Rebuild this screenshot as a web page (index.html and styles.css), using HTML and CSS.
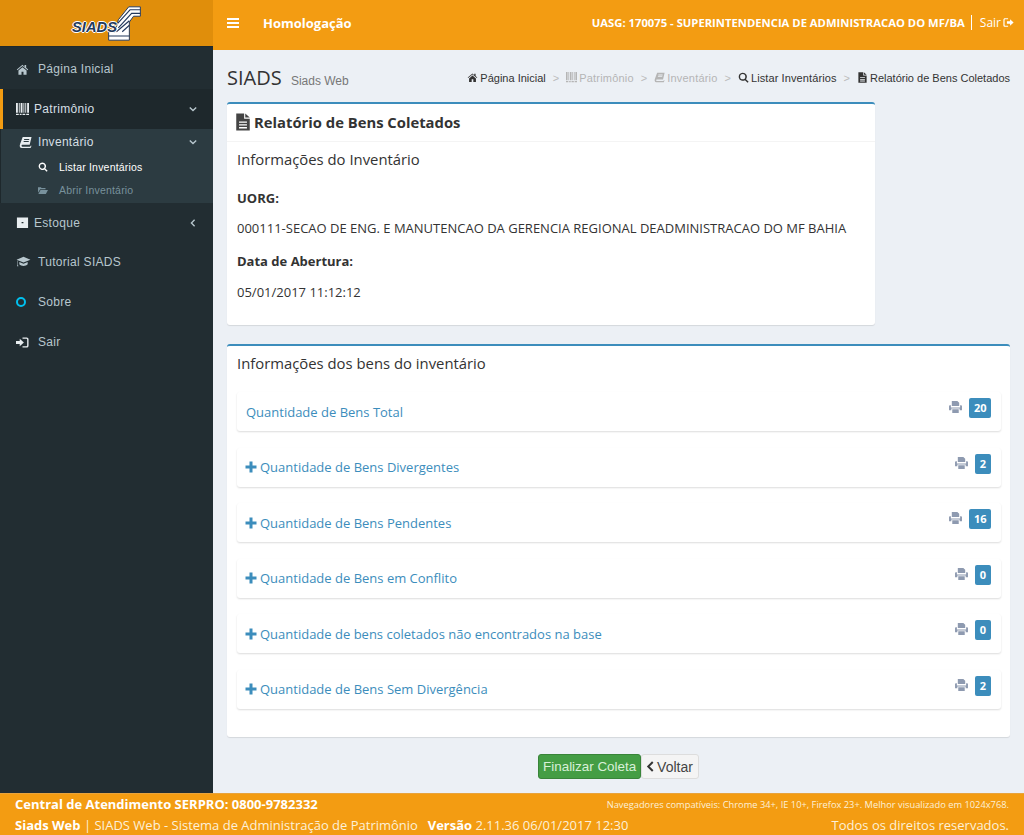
FILE: index.html
```html
<!DOCTYPE html>
<html>
<head>
    <title>SIADS</title>
    <meta charset="utf-8">
    <link rel="stylesheet" href="styles.css">
</head>
<body>
    <svg class="defs" width="0" height="0">
        <symbol id="i-home" viewBox="0 0 16 14"><path d="M8 1 1 7l.7.9L8 2.600l6.300 5.300.7-.9-2.500-2.100V1.500h-2v2.300zM3 8.300V13.500h3.800V9.700h2.400v3.800H13V8.300L8 4.100z"/></symbol>
        <symbol id="i-barcode" viewBox="0 0 14 14"><path d="M0 0h2v10.500H0zM3 0h1v10.500H3zM5 0h2v10.500H5zM8 0h1v10.500H8zM10 0h1v10.500h-1zM12 0h2v10.500h-2zM0 11.500h3v1.500H0zM4 11.500h2V13H4zM7 11.500h3V13H7zM11 11.500h3V13h-3z"/></symbol>
        <symbol id="i-book" viewBox="0 0 14 14"><path d="M4 1h9.500L11.500 9.500H3.500C2.500 9.500 2.500 11.500 3.500 11.500H12L12.500 10.500 13.500 10.500 12.500 13H3C.8 13 .3 10.500 1.200 8.500zM5.500 3.300v1h5.500v-1zM5 5.500v1h5.500v-1z"/></symbol>
        <symbol id="i-search" viewBox="0 0 14 14"><path fill-rule="evenodd" d="M6 .8a5.200 5.200 0 0 1 4.200 8.300l3.300 3.300-1.300 1.300-3.300-3.300A5.200 5.200 0 1 1 6 .8zm0 1.900a3.300 3.300 0 1 0 0 6.600 3.300 3.300 0 0 0 0-6.600z"/></symbol>
        <symbol id="i-folder" viewBox="0 0 14 14"><path d="M0 11V3h4l1 1.300h5.500V6H3L0 11zM3.500 7H14l-3 5.500H.5z"/></symbol>
        <symbol id="i-archive" viewBox="0 0 14 14"><path fill-rule="evenodd" d="M1 1.500h12v11.300H1zM6 6.500v1.200h2V6.500z"/></symbol>
        <symbol id="i-cap" viewBox="0 0 16 14"><path d="M8 2 .5 5 8 8l7.500-3zM3.500 7.500V10c1 1.300 2.800 1.800 4.500 1.800s3.500-.5 4.500-1.800V7.500L8 9.300zM1.500 6v4.500L1 12h1.500L2 10.500V6.200z"/></symbol>
        <symbol id="i-signin" viewBox="0 0 14 14"><path d="M0 5.500h4V3l4.500 4L4 11V8.500H0zM7 1.500h4.500c1.200 0 2 .8 2 2v7c0 1.200-.8 2-2 2H7V11h4.300c.5 0 .7-.3.7-.7V3.700c0-.4-.2-.7-.7-.7H7z"/></symbol>
        <symbol id="i-signout" viewBox="0 0 14 14"><path d="M5 5.500h4V3l4.500 4L9 11V8.500H5zM6.500 1.500H2.500c-1.200 0-2 .8-2 2v7c0 1.200.8 2 2 2h4V11H2.700c-.5 0-.7-.3-.7-.7V3.700c0-.4.2-.7.7-.7h3.800z"/></symbol>
        <symbol id="i-file" viewBox="0 0 14 16"><path fill-rule="evenodd" d="M1 .5h7v4.500h5v10.500H1zM9 .5 13 4H9zM3.500 7.500v1.200h7V7.500zM3.500 10v1.200h7V10zM3.500 12.500v1.200h7v-1.200z"/></symbol>
        <symbol id="i-print" viewBox="0 0 14 13"><path fill-rule="evenodd" d="M3 0h6l2 2v3.500H3zM0 5.500c0-.6.400-1 1-1h1v2.500h10V4.500h1c.6 0 1 .4 1 1V10h-2.500V8h-9v2H0zM3.500 9h7v4h-7z"/></symbol>
        <symbol id="i-plus" viewBox="0 0 12 12"><path d="M4.500 .5h3v4h4v3h-4v4h-3v-4h-4v-3h4z"/></symbol>
    </svg>

    <div class="shell">
        <aside class="sidebar">
            <div class="logo">
                <span class="logo-text">SIADS</span>
                <svg class="logo-mark" width="33" height="35" viewBox="126 13 102 107">
                    <path d="M190 15H226V44H205L192 62V118H128V92H148L158 55z" fill="#fff" stroke="#23395d" stroke-width="3"/>
                    <path d="M226 24H194L156 66M226 35H199L158 80M192 58 152 92M192 72 170 92M192 105H128" stroke="#23395d" stroke-width="3.500" fill="none"/>
                </svg>
            </div>
            <ul class="menu">
                <li class="menu-item item-nudge item-home"><svg class="ico"><use href="#i-home"/></svg><span class="gap-l">Página Inicial</span></li>
                <li class="menu-item item-active"><svg class="ico ico-bright"><use href="#i-barcode"/></svg><span>Patrimônio</span>
                    <svg class="chev" viewBox="0 0 10 10"><path d="M1 3l4 4 4-4" /></svg></li>
                <li class="submenu">
                    <div class="sub-head"><svg class="ico ico-bright"><use href="#i-book"/></svg><span>Inventário</span>
                        <svg class="chev" viewBox="0 0 10 10"><path d="M1 3l4 4 4-4" /></svg></div>
                    <div class="sub-link sub-current"><svg class="ico-sm"><use href="#i-search"/></svg><span>Listar Inventários</span></div>
                    <div class="sub-link"><svg class="ico-sm"><use href="#i-folder"/></svg><span>Abrir Inventário</span></div>
                </li>
                <li class="menu-item item-stock"><svg class="ico ico-bright"><use href="#i-archive"/></svg><span>Estoque</span>
                    <svg class="chev" viewBox="0 0 10 10"><path d="M7 1 3 5l4 4" /></svg></li>
                <li class="menu-item item-tutorial"><svg class="ico"><use href="#i-cap"/></svg><span class="gap-l">Tutorial SIADS</span></li>
                <li class="menu-item item-nudge"><span class="ring"></span><span class="gap-l">Sobre</span></li>
                <li class="menu-item item-nudge"><svg class="ico ico-bright"><use href="#i-signin"/></svg><span class="gap-l">Sair</span></li>
            </ul>
        </aside>

        <div class="main">
            <header class="topbar">
                <svg class="burger" width="12" height="10" viewBox="0 0 12 10"><path d="M0 0h12v2H0zM0 4h12v2H0zM0 8h12v2H0z"/></svg>
                <span class="env">Homologação</span>
                <span class="uasg">UASG: 170075 - SUPERINTENDENCIA DE ADMINISTRACAO DO MF/BA</span>
                <span class="bar-sep"></span>
                <span class="logout">Sair <svg class="ico-logout"><use href="#i-signout"/></svg></span>
            </header>

            <main class="content">
                <div class="page-head">
                    <h1>SIADS <small>Siads Web</small></h1>
                    <ol class="crumbs">
                        <li><svg class="crumb-ico"><use href="#i-home"/></svg>Página Inicial</li>
                        <li class="sep">&gt;</li>
                        <li class="off"><svg class="crumb-ico"><use href="#i-barcode"/></svg>Patrimônio</li>
                        <li class="sep">&gt;</li>
                        <li class="off"><svg class="crumb-ico"><use href="#i-book"/></svg>Inventário</li>
                        <li class="sep">&gt;</li>
                        <li class="crumb-list"><svg class="crumb-ico"><use href="#i-search"/></svg>Listar Inventários</li>
                        <li class="sep">&gt;</li>
                        <li><svg class="crumb-ico"><use href="#i-file"/></svg>Relatório de Bens Coletados</li>
                    </ol>
                </div>

                <section class="box box-info">
                    <h2 class="box-title"><svg class="title-ico"><use href="#i-file"/></svg>Relatório de Bens Coletados</h2>
                    <div class="box-body">
                        <h3>Informações do Inventário</h3>
                        <p class="label label-first">UORG:</p>
                        <p>000111-SECAO DE ENG. E MANUTENCAO DA GERENCIA REGIONAL DEADMINISTRACAO DO MF BAHIA</p>
                        <p class="label">Data de Abertura:</p>
                        <p class="date">05/01/2017 11:12:12</p>
                    </div>
                </section>

                <section class="box box-goods">
                    <h3>Informações dos bens do inventário</h3>
                    <div class="row">
                        <a class="row-link">Quantidade de Bens Total</a>
                        <svg class="print"><use href="#i-print"/></svg><span class="badge">20</span>
                    </div>
                    <div class="row">
                        <a class="row-link"><svg class="plus"><use href="#i-plus"/></svg>Quantidade de Bens Divergentes</a>
                        <svg class="print"><use href="#i-print"/></svg><span class="badge">2</span>
                    </div>
                    <div class="row">
                        <a class="row-link"><svg class="plus"><use href="#i-plus"/></svg>Quantidade de Bens Pendentes</a>
                        <svg class="print"><use href="#i-print"/></svg><span class="badge">16</span>
                    </div>
                    <div class="row">
                        <a class="row-link"><svg class="plus"><use href="#i-plus"/></svg>Quantidade de Bens em Conflito</a>
                        <svg class="print"><use href="#i-print"/></svg><span class="badge">0</span>
                    </div>
                    <div class="row">
                        <a class="row-link"><svg class="plus"><use href="#i-plus"/></svg>Quantidade de bens coletados não encontrados na base</a>
                        <svg class="print"><use href="#i-print"/></svg><span class="badge">0</span>
                    </div>
                    <div class="row">
                        <a class="row-link"><svg class="plus"><use href="#i-plus"/></svg>Quantidade de Bens Sem Divergência</a>
                        <svg class="print"><use href="#i-print"/></svg><span class="badge">2</span>
                    </div>
                </section>

                <div class="actions">
                    <button class="btn btn-success">Finalizar Coleta</button>
                    <button class="btn btn-back"><svg class="back-ico" viewBox="0 0 10 12"><path d="M7.500 1 2.500 6l5 5"/></svg>Voltar</button>
                </div>
            </main>
        </div>
    </div>

    <footer class="footer">
        <div class="foot-line">
            <strong class="foot-phone">Central de Atendimento SERPRO: 0800-9782332</strong>
            <span class="foot-small">Navegadores compatíveis: Chrome 34+, IE 10+, Firefox 23+. Melhor visualizado em 1024x768.</span>
        </div>
        <div class="foot-line">
            <span><strong>Siads Web</strong> | SIADS Web - Sistema de Administração de Patrimônio &nbsp;<strong class="foot-ver">Versão</strong> 2.11.36 06/01/2017 12:30</span>
            <span>Todos os direitos reservados.</span>
        </div>
    </footer>
</body>
</html>
```

FILE: styles.css
```css
* {
    box-sizing: border-box;
}
html, body {
    margin: 0;
    height: 100%;
}
body {
    display: flex;
    flex-direction: column;
    height: 835px;
    overflow: hidden;
    background: #ecf0f5;
    color: #333;
    font-family: "Open Sans", sans-serif;
    font-size: 13px;
}
.defs {
    display: none;
}
.shell {
    display: flex;
    height: 793px;
}

/* sidebar */
.sidebar {
    width: 213px;
    flex: none;
    background: #222d32;
}
.logo {
    display: flex;
    align-items: center;
    justify-content: center;
    height: 47px;
    background: #e08e0b;
    border-bottom: 1px solid #1e282c;
}
.logo-text {
    position: relative;
    z-index: 1;
    margin-right: -9px;
    margin-top: 8px;
    color: #23395d;
    font-family: "Liberation Sans", sans-serif;
    font-size: 14.700px;
    font-style: italic;
    font-weight: bold;
    text-shadow: 1px 0 0 #fff, -1px 0 0 #fff, 0 1px 0 #fff, 0 -1px 0 #fff;
}
.menu {
    margin: 0;
    padding: 0;
    list-style: none;
    color: #b8c7ce;
    font-family: "Liberation Sans", sans-serif;
    font-size: 12px;
    letter-spacing: 0.3px;
}
.menu-item {
    display: flex;
    align-items: center;
    height: 40px;
    padding-left: 16px;
}
.item-nudge {
    padding-top: 2px;
}
.item-home {
    height: 42px;
}
.item-active {
    height: 40px;
    background: #1e282c;
    border-left: 3px solid #f39c12;
    padding-left: 13px;
    color: #d5dfe4;
}
.item-stock {
    height: 39px;
}
.item-tutorial {
    height: 39px;
}
.ico {
    width: 13px;
    height: 13px;
    margin-right: 5px;
    flex: none;
    fill: #b8c7ce;
}
.item-tutorial .ico {
    width: 15px;
    margin-right: 3px;
}
.ico-bright {
    fill: #e8edf0;
}
.gap-l {
    margin-left: 4px;
}
.chev {
    width: 8px;
    height: 8px;
    margin-left: auto;
    margin-right: 16px;
    fill: none;
    stroke: #b8c7ce;
    stroke-width: 1.700;
}
.ring {
    width: 10px;
    height: 10px;
    margin-right: 8px;
    border: 2px solid #00c0ef;
    border-radius: 50%;
    flex: none;
}
.submenu {
    height: 74px;
    padding-top: 4px;
    background: #2c3b41;
    border-left: 1px solid #1e282c;
}
.sub-head {
    display: flex;
    align-items: center;
    height: 18px;
    padding-left: 18px;
    color: #d5dfe4;
}
.sub-head .ico {
    margin-right: 6px;
}
.sub-link {
    display: flex;
    align-items: center;
    height: 23px;
    padding-left: 37px;
    color: #78919c;
    font-size: 10.500px;
    letter-spacing: 0.2px;
}
.sub-current {
    margin-top: 4px;
    color: #fff;
}
.ico-sm {
    width: 10px;
    height: 10px;
    margin-right: 11px;
    fill: #78919c;
}
.sub-current .ico-sm {
    fill: #fff;
}

/* top bar */
.main {
    flex: 1;
    min-width: 0;
    display: flex;
    flex-direction: column;
}
.topbar {
    display: flex;
    align-items: center;
    height: 50px;
    flex: none;
    padding: 0 10px 5px 14px;
    background: #f39c12;
    color: #fff;
}
.burger {
    fill: #fff;
}
.env {
    margin-left: 24px;
    font-size: 13px;
    font-weight: bold;
}
.uasg {
    margin-left: auto;
    font-size: 11.250px;
    font-weight: bold;
}
.bar-sep {
    width: 1px;
    height: 15px;
    margin: 0 8px 0 6px;
    background: #fff;
}
.logout {
    display: flex;
    align-items: center;
    gap: 2px;
    font-size: 12px;
}
.ico-logout {
    width: 11px;
    height: 11px;
    fill: #fff;
}

/* content */
.content {
    flex: 1;
    padding: 13px 14px 0;
}
.page-head {
    display: flex;
    align-items: center;
    justify-content: space-between;
    height: 29px;
    margin-bottom: 10px;
}
h1 {
    margin: 0;
    font-size: 20px;
    font-weight: normal;
}
h1 small {
    margin-left: 4px;
    color: #777;
    font-family: "Liberation Sans", sans-serif;
    font-size: 12px;
}
.crumbs {
    display: flex;
    align-items: center;
    gap: 7px;
    margin: 0;
    padding: 0;
    list-style: none;
    font-family: "Liberation Sans", sans-serif;
    font-size: 11px;
}
.crumbs .sep {
    color: #bbb;
}
.crumbs .off {
    color: #b5b5b5;
    letter-spacing: 0.2px;
}
.crumbs .crumb-list {
    letter-spacing: 0.1px;
}
.crumb-ico {
    width: 11px;
    height: 11px;
    margin-right: 2px;
    vertical-align: -1px;
    fill: #333;
}
.off .crumb-ico {
    fill: #b5b5b5;
}
.box {
    background: #fff;
    border-top: 2px solid #3c8dbc;
    border-radius: 3px;
    box-shadow: 0 1px 1px rgba(0, 0, 0, 0.1);
}
.box-info {
    width: 648px;
    height: 223px;
}
.box-title {
    display: flex;
    align-items: center;
    height: 38px;
    margin: 0;
    padding: 0 8px 2px;
    border-bottom: 1px solid #f4f4f4;
    font-size: 14.800px;
    font-weight: bold;
}
.title-ico {
    width: 16px;
    height: 18px;
    margin-right: 3px;
    fill: #444;
}
.box-body {
    padding: 7px 10px;
}
h3 {
    margin: 0;
    font-size: 14.850px;
    font-weight: normal;
    line-height: 21px;
}
.box-body p {
    margin: 10px 0 0;
    font-size: 13px;
    line-height: 20px;
}
.box-body .label {
    margin-top: 13px;
    font-weight: bold;
}
.box-body .label-first {
    margin-top: 18px;
}
.box-body .date {
    margin-top: 11px;
}
.box-goods {
    height: 393px;
    margin-top: 19px;
    padding: 7px 9px 0 10px;
}
.box-goods h3 {
    margin-bottom: 18px;
}
.row {
    display: flex;
    align-items: center;
    height: 39px;
    margin-bottom: 16.500px;
    padding: 0 10px 0 9px;
    border-radius: 3px;
    box-shadow: 0 1px 2px rgba(0, 0, 0, 0.14);
}
.row-link {
    margin-right: auto;
    color: #3c8dbc;
    font-size: 13px;
}
.plus {
    width: 12px;
    height: 12px;
    margin: 0 3px 0 -1px;
    vertical-align: -1px;
    fill: #3c8dbc;
}
.print {
    width: 13px;
    height: 12px;
    margin: 0 7px 9px 0;
    fill: #8e9ab0;
}
.badge {
    min-width: 16px;
    height: 20px;
    margin-bottom: 7px;
    padding: 0 4.500px;
    background: #3c8dbc;
    border-radius: 2px;
    color: #fff;
    font-size: 11px;
    font-weight: bold;
    line-height: 20px;
    text-align: center;
}
.actions {
    display: flex;
    justify-content: center;
    align-items: center;
    margin-top: 17px;
}
.btn {
    height: 25px;
    padding: 0 4px;
    border-radius: 3px;
    font-family: "Liberation Sans", sans-serif;
}
.btn-success {
    background: #449d44;
    border: 1px solid #398439;
    color: #d8f0d8;
    font-size: 13.400px;
}
.btn-back {
    display: flex;
    align-items: center;
    padding-right: 5px;
    background: #f4f4f4;
    border: 1px solid #ddd;
    color: #444;
    font-size: 14px;
}
.back-ico {
    width: 9px;
    height: 11px;
    margin-right: 2px;
    fill: none;
    stroke: #333;
    stroke-width: 2.200;
}

/* footer */
.footer {
    height: 42px;
    flex: none;
    background: #f39c12;
    padding: 0 15px;
    color: #fff;
    border-top: 1px solid #e8a33c;
}
.foot-line {
    display: flex;
    align-items: center;
    justify-content: space-between;
    height: 20px;
    font-size: 13px;
    color: #fdf0d8;
}
.foot-line + .foot-line {
    margin-top: 1px;
}
.foot-line strong {
    color: #fff;
}
.foot-line .foot-ver {
    margin-left: 3px;
}
.foot-small {
    font-size: 9.300px;
}
```
